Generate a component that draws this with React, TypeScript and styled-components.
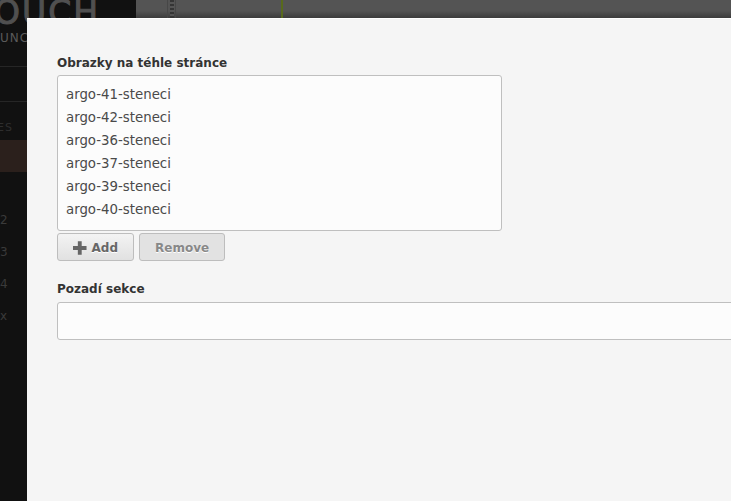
import React from 'react'
import styled, {createGlobalStyle} from 'styled-components'

const images = ['argo-41-steneci', 'argo-42-steneci', 'argo-36-steneci', 'argo-37-steneci', 'argo-39-steneci', 'argo-40-steneci']
const menuNumbers = ['2', '3', '4', 'x']

const App = () => {
  return (
    <Page>
      <GlobalStyle />
      <Sidebar>
        <Logo>OUCH</Logo>
        <Tagline>UNCO</Tagline>
        <Divider />
        <Divider $gap={34} />
        <SectionTitle>ES</SectionTitle>
        <ActiveItem />
        <Numbers>
          {menuNumbers.map((n) => (
            <NumberItem key={n}>{n}</NumberItem>
          ))}
        </Numbers>
      </Sidebar>
      <Main>
        <Dotted />
        <GreenLine />
      </Main>
      <Modal>
        <Label>Obrazky na téhle stránce</Label>
        <ListBox>
          {images.map((name) => (
            <ListItem key={name}>{name}</ListItem>
          ))}
        </ListBox>
        <Buttons>
          <Button>
            <svg width="14" height="14" viewBox="0 0 14 14">
              <path d="M5 0h4v5h5v4H9v5H5V9H0V5h5z" fill="#666" />
            </svg>
            Add
          </Button>
          <Button $disabled>Remove</Button>
        </Buttons>
        <Label>Pozadí sekce</Label>
        <TextInput />
      </Modal>
    </Page>
  )
}

export default App

const GlobalStyle = createGlobalStyle`
  html, body {
    margin: 0;
    padding: 0;
    height: 100%;
    overflow: hidden;
    background: #111;
  }
`
const Page = styled.div`
  position: relative;
  display: flex;
  width: 731px;
  height: 501px;
  overflow: hidden;
  font-family: "DejaVu Sans", sans-serif;
`
const Sidebar = styled.div`
  width: 136px;
  flex-shrink: 0;
  display: flex;
  flex-direction: column;
  background: #111;
  overflow: hidden;
`
const Logo = styled.div`
  height: 30px;
  margin-left: -6px;
  font-size: 33px;
  line-height: 26px;
  letter-spacing: 2px;
  white-space: nowrap;
  color: #505050;
  -webkit-text-stroke: 1px #505050;
`
const Tagline = styled.div`
  margin-top: 1px;
  font-size: 12px;
  line-height: 14px;
  letter-spacing: 1px;
  white-space: nowrap;
  color: #5a5a5a;
`
const Divider = styled.div<{$gap?: number}>`
  flex-shrink: 0;
  height: 1px;
  margin-top: ${(p) => p.$gap ?? 21}px;
  background: #262626;
`
const SectionTitle = styled.div`
  margin-top: 19px;
  margin-left: -3px;
  font-size: 11px;
  line-height: 14px;
  letter-spacing: 1px;
  color: #2e2e2e;
`
const ActiveItem = styled.div`
  flex-shrink: 0;
  height: 32px;
  margin-top: 5px;
  background: #2b201c;
`
const Numbers = styled.div`
  display: flex;
  flex-direction: column;
  margin-top: 32px;
`
const NumberItem = styled.div`
  height: 32px;
  font-size: 12px;
  line-height: 32px;
  color: #3a3a3a;
`
const Main = styled.div`
  flex: 1;
  position: relative;
  background: linear-gradient(#545454 0, #545454 11px, #3c3c3c 18px);
`
const Dotted = styled.div`
  position: absolute;
  left: 31px;
  top: 0;
  box-sizing: border-box;
  width: 9px;
  height: 18px;
  border-left: 1px solid #474747;
  border-right: 1px solid #474747;
  background: repeating-linear-gradient(#353535 0 2px, #555 2px 4px) no-repeat 2px 0 / 4px 100%;
`
const GreenLine = styled.div`
  position: absolute;
  left: 145px;
  top: 0;
  width: 2px;
  height: 18px;
  background: #586a1c;
`
const Modal = styled.div`
  position: absolute;
  left: 27px;
  top: 18px;
  right: 0;
  bottom: 0;
  box-sizing: border-box;
  padding: 36px 0 0 30px;
  background: #f5f5f5;
  border-top: 1px solid #fff;
`
const Label = styled.div`
  font-size: 12px;
  font-weight: 700;
  line-height: 16px;
  color: #333;
`
const ListBox = styled.div`
  box-sizing: border-box;
  width: 445px;
  height: 156px;
  margin-top: 4px;
  padding: 7px 8px;
  background: #fcfcfc;
  border: 1px solid #bfbfbf;
  border-radius: 3px;
`
const ListItem = styled.div`
  font-size: 13.33px;
  line-height: 23px;
  color: #4a4a4a;
`
const Buttons = styled.div`
  display: flex;
  gap: 5px;
  margin-top: 2px;
  margin-bottom: 20px;
`
const Button = styled.div<{$disabled?: boolean}>`
  box-sizing: border-box;
  height: 28px;
  display: flex;
  align-items: center;
  gap: 5px;
  padding: 1px 15px 0;
  width: ${(p) => (p.$disabled ? '86px' : '77px')};
  font-size: 12px;
  font-weight: 700;
  color: ${(p) => (p.$disabled ? '#888' : '#666')};
  text-shadow: 0 1px 0 #fff;
  background: ${(p) => (p.$disabled ? '#e2e2e2' : 'linear-gradient(#f3f3f3, #e1e1e1)')};
  border: 1px solid #bdbdbd;
  border-radius: 3px;
`
const TextInput = styled.div`
  box-sizing: border-box;
  width: 720px;
  height: 38px;
  margin-top: 5px;
  background: #fcfcfc;
  border: 1px solid #bfbfbf;
  border-radius: 3px;
`
